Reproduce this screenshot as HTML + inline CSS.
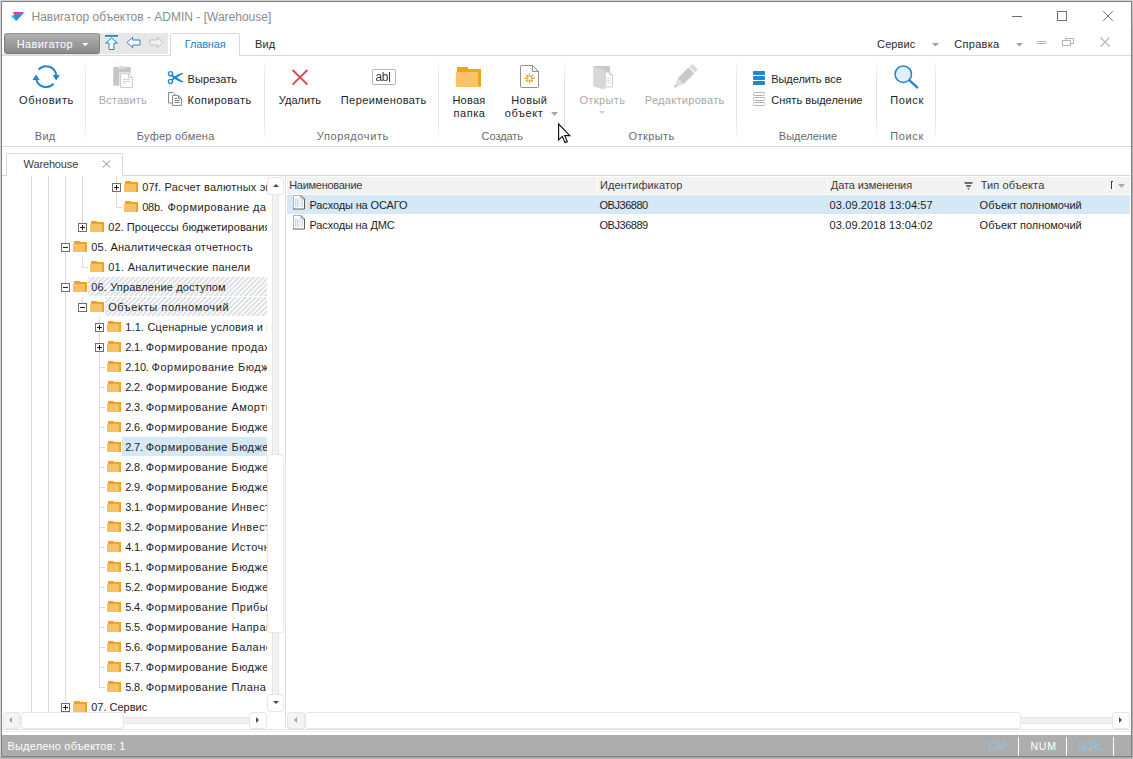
<!DOCTYPE html>
<html><head><meta charset="utf-8">
<style>
*{box-sizing:border-box;margin:0;padding:0}
html,body{width:1133px;height:759px;overflow:hidden;background:#fff}
body{font-family:"Liberation Sans",sans-serif;font-size:12px;color:#1e1e1e;position:relative}
.a{position:absolute}
.t{position:absolute;white-space:nowrap;line-height:14px}
.tt{font-size:11px;color:#1e1e1e;letter-spacing:0.3px}
#win{position:absolute;left:0;top:0;width:1133px;height:759px;background:#fff;overflow:hidden}
.sep{position:absolute;width:1px;top:58px;height:85px;background:linear-gradient(#fff,#e3e3e3 25%,#e3e3e3 75%,#fff)}
.hatch{background:repeating-linear-gradient(135deg,#e2e3e6 0,#e2e3e6 1.95px,#fff 2.15px,#fff 3.35px,#e2e3e6 3.5355px)}
.vl{position:absolute;width:1px;background:#dcdcdc}
.sb{position:absolute;background:#fff;border:1px solid #e6e6e6;border-radius:3px}
.trk{position:absolute;background:#f1f1f1;border:1px solid #e5e5e5}
#treeclip{position:absolute;left:2px;top:176px;width:265px;height:537px;overflow:hidden}
#treeclip>div{position:absolute;left:-2px;top:-176px}
</style></head><body>
<div id="win">
<!-- window frame -->
<div class="a" style="left:0;top:0;width:1133px;height:759px;background:#d3d3d3"></div>
<div class="a" style="left:1132px;top:0;width:1px;height:759px;background:linear-gradient(#cfcfcf,#b0b0b0 30px,#b0b0b0)"></div>
<div class="a" style="left:0;top:757px;width:1133px;height:2px;background:linear-gradient(#a4a4a4,#b8b8b8)"></div>
<div class="a" style="left:1px;top:1px;width:1131px;height:756px;background:#808080"></div>
<div class="a" style="left:2px;top:2px;width:1129px;height:754px;background:#fff"></div>

<!-- TITLE -->
<svg class="a" style="left:10px;top:11px" width="16" height="11" viewBox="0 0 16 11">
<polygon points="2.8,1 14.5,1 4.6,4.2" fill="#e6349a"/>
<polygon points="1,5 5,3.6 6,10" fill="#21c4f0"/>
<polygon points="14.8,1 4.2,4 6,10.2" fill="#2b8fd0"/>
</svg>
<!-- window buttons -->
<div class="a" style="left:1012px;top:16px;width:10px;height:1px;background:#6e6e6e"></div>
<div class="a" style="left:1057px;top:11px;width:10px;height:10px;border:1px solid #6e6e6e"></div>
<svg class="a" style="left:1103px;top:11px" width="10" height="10" viewBox="0 0 10 10"><path d="M0.3,0.3 L9.7,9.7 M9.7,0.3 L0.3,9.7" stroke="#6e6e6e" stroke-width="1" fill="none"/></svg>

<!-- TAB ROW -->
<div class="a" style="left:2px;top:55px;width:1129px;height:1px;background:#d9d9d9"></div>
<div class="a" style="left:99px;top:33px;width:69px;height:21px;background:#e7e7e7"></div>
<div class="a" style="left:4px;top:33px;width:96px;height:21px;border:1px solid #838383;border-top-color:#979797;border-bottom-color:#777;border-radius:3px;background:linear-gradient(#b0b0b0,#8a8a8a)"></div>
<div class="a" style="left:2px;top:54px;width:98px;height:1px;background:#e9e9e9"></div>
<svg class="a" style="left:81.5px;top:43px" width="7" height="4" viewBox="0 0 7 4"><polygon points="0.3,0 6.3,0 3.3,3.2" fill="#fff"/></svg>
<!-- quick access icons -->
<svg class="a" style="left:100px;top:33px" width="68" height="21" viewBox="100 33 68 21">
<rect x="105" y="35" width="13" height="1.8" fill="#1f86cf"/>
<path d="M111.5,37.9 L117.4,43 H114 V49.5 H109 V43 H105.6 Z" fill="#fff" stroke="#1f86cf" stroke-width="1"/>
<path d="M127,42.5 L132.7,37.2 V40 H140 V45 H132.7 V47.8 Z" fill="#fff" stroke="#1f86cf" stroke-width="1"/>
<path d="M163,42.5 L157.3,37.2 V40 H150 V45 H157.3 V47.8 Z" fill="#f1f1f1" stroke="#c2c2c2" stroke-width="1"/>
</svg>
<!-- tabs -->
<div class="a" style="left:170px;top:33px;width:70px;height:23px;border:1px solid #dbdbdb;border-bottom:0;border-radius:2px 2px 0 0;background:#fff"></div>
<svg class="a" style="left:932px;top:43px" width="7" height="4" viewBox="0 0 7 4"><polygon points="0,0 7,0 3.5,3.6" fill="#a2a2a2"/></svg>
<svg class="a" style="left:1016px;top:43px" width="7" height="4" viewBox="0 0 7 4"><polygon points="0,0 7,0 3.5,3.6" fill="#a2a2a2"/></svg>
<!-- mdi buttons -->
<div class="a" style="left:1036px;top:41px;width:11px;height:3px;border:1px solid #b5b5b5;border-radius:1.5px"></div>
<div class="a" style="left:1065px;top:38px;width:9px;height:6px;border:1px solid #b5b5b5;border-radius:.5px"></div>
<div class="a" style="left:1062px;top:40px;width:9px;height:6px;border:1px solid #b5b5b5;border-radius:.5px;background:#fff"></div>
<svg class="a" style="left:1100px;top:37px" width="10" height="10" viewBox="0 0 10 10"><path d="M0.5,0.5 L9.5,9.5 M9.5,0.5 L0.5,9.5" stroke="#b5b5b5" stroke-width="1.1" fill="none"/></svg>

<!-- RIBBON -->
<div class="a" style="left:2px;top:146px;width:1129px;height:1px;background:#d9d9d9"></div>
<div class="sep" style="left:85px"></div>
<div class="sep" style="left:264px"></div>
<div class="sep" style="left:438px"></div>
<div class="sep" style="left:564px"></div>
<div class="sep" style="left:736px"></div>
<div class="sep" style="left:876px"></div>
<div class="sep" style="left:935px"></div>

<!-- refresh -->
<svg class="a" style="left:32px;top:64px" width="28" height="26" viewBox="0 0 28 26">
<path d="M6.6,5.6 A10.2,10.2 0 0 1 24.3,11.6" stroke="#1f86cf" stroke-width="2" fill="none"/>
<polygon points="20.6,11 27.8,11 24.2,16.6" fill="#1f86cf"/>
<path d="M21.6,19.8 A10.2,10.2 0 0 1 4.3,15.4" stroke="#1f86cf" stroke-width="2" fill="none"/>
<polygon points="0.5,16 7.7,16 4.1,10.4" fill="#1f86cf"/>
</svg>
<!-- paste (disabled) -->
<svg class="a" style="left:112px;top:65px" width="22" height="24" viewBox="0 0 22 24">
<rect x="1.2" y="2" width="17.6" height="18.8" rx="1.2" fill="#c6c6c6"/>
<rect x="6.2" y="1.1" width="7.7" height="2.7" fill="#dddddd"/>
<path d="M8.6,8.7 H16.6 L20.4,12.5 V22.6 H8.6 Z" fill="#fff" stroke="#fff" stroke-width="2.4"/>
<path d="M8.6,8.7 H16.6 L20.4,12.5 V22.6 H8.6 Z" fill="#fff" stroke="#c9c9c9" stroke-width="1"/>
<path d="M16.6,8.7 V12.5 H20.4" fill="none" stroke="#c9c9c9"/>
<path d="M11,14.4 H18 M11,16.5 H18 M11,18.6 H14" stroke="#cfcfcf" stroke-width="1"/>
</svg>
<!-- scissors -->
<svg class="a" style="left:167px;top:70px" width="17" height="15" viewBox="0 0 17 15">
<circle cx="3.5" cy="3.7" r="2.1" fill="none" stroke="#1f86cf" stroke-width="1.4"/>
<circle cx="3.5" cy="11.5" r="2.1" fill="none" stroke="#1f86cf" stroke-width="1.4"/>
<path d="M5.3,4.6 C8.5,6.6 12.5,9.6 16.2,11.5 L15.9,12.5 C12,12 8,9.4 4.4,6 Z" fill="#1f86cf"/>
<path d="M5.3,10.6 C8.5,8.6 12.5,5.6 16.2,3.7 L15.9,2.7 C12,3.2 8,5.8 4.4,9.2 Z" fill="#1f86cf"/>
</svg>
<!-- copy -->
<svg class="a" style="left:167px;top:91px" width="16" height="16" viewBox="0 0 16 16">
<path d="M1.5,1.5 H6 L8.5,4 V12 H1.5 Z" fill="#fff" stroke="#8c8c8c"/>
<path d="M5.5,4.5 H11.5 L14.5,7.5 V14.5 H5.5 Z" fill="#fff" stroke="#8c8c8c"/>
<path d="M11.5,4.5 V7.5 H14.5" fill="none" stroke="#8c8c8c"/>
<path d="M7.5,7.5 H10 M7.5,9.5 H12.5 M7.5,11.5 H12.5" stroke="#7c7c7c"/>
</svg>
<!-- delete X -->
<svg class="a" style="left:291px;top:69px" width="18" height="17" viewBox="0 0 18 17"><path d="M1.6,1 L16.4,15.6 M16.4,1 L1.6,15.6" stroke="#e0474f" stroke-width="1.9" fill="none"/></svg>
<!-- rename -->
<div class="a" style="left:372px;top:69px;width:24px;height:16px;border:1px solid #b2b2b2;border-radius:1.5px;background:#fff"></div>
<div class="t" style="left:375.6px;top:69.6px;font-size:12px;color:#3a3a3a;letter-spacing:-0.6px;filter:grayscale(1)">ab</div>
<div class="a" style="left:389px;top:72px;width:1px;height:10px;background:#3a3a3a"></div>
<!-- big folder -->
<svg class="a" style="left:455px;top:66px" width="27" height="22" viewBox="0 0 27 22">
<path d="M2,1 H13 V3 H26 V20.8 H2 Z" fill="#f3a11f"/>
<rect x="0.8" y="6" width="22.2" height="14.8" fill="#f9c468"/>
</svg>
<!-- new object -->
<svg class="a" style="left:519px;top:64px" width="21" height="25" viewBox="0 0 21 25">
<path d="M2.5,1.5 H13.5 L19.5,7.5 V22.5 Q19.5,23.5 18.5,23.5 H2.5 Q1.5,23.5 1.5,22.5 V2.5 Q1.5,1.5 2.5,1.5 Z" fill="#fff" stroke="#8e8e8e"/>
<path d="M13.5,1.5 V7.5 H19.5" fill="none" stroke="#8e8e8e"/>
<g stroke="#f5a21b" stroke-width="1.5"><path d="M10.5,9.4 V12.6 M10.5,16 V19.2 M5.6,14.3 H8.8 M12.2,14.3 H15.4 M7.2,11 L9.3,13.1 M13.8,11 L11.7,13.1 M7.2,17.6 L9.3,15.5 M13.8,17.6 L11.7,15.5"/></g>
</svg>
<svg class="a" style="left:551px;top:112px" width="7" height="4" viewBox="0 0 7 4"><polygon points="0,0 7,0 3.5,4" fill="#a8a8a8"/></svg>
<!-- open (disabled) -->
<svg class="a" style="left:592px;top:65px" width="22" height="26" viewBox="0 0 22 26">
<path d="M1.5,1 H17 Q18,1 18,2 V21 H1.5 Z" fill="#c8c8c8"/>
<path d="M13.2,7 H17.8 L20.5,9.7 V22 H13.2 Z" fill="#fff" stroke="#cdcdcd"/>
<path d="M17.6,7 V9.9 H20.5" fill="none" stroke="#cdcdcd"/>
<path d="M14.5,13.3 H18.8 M14.5,15.5 H18.8 M14.5,17.7 H18.8" stroke="#dcdcdc"/>
<path d="M1.5,1.3 L12.7,4.8 V24.8 L1.5,21.5 Z" fill="#d7d7d7"/>
</svg>
<div class="a" style="left:598.5px;top:110.5px;width:0;height:0;border:3px solid transparent;border-top:3.5px solid #d2d2d2;border-bottom:0"></div>
<!-- pencil (disabled) -->
<svg class="a" style="left:673px;top:63px" width="26" height="26" viewBox="0 0 26 26">
<polygon points="1,24.8 10.62,20.98 4.82,15.18" fill="#e0e0e0"/>
<polygon points="1,24.8 4.24,23.52 2.28,21.56" fill="#bdbdbd"/>
<polygon points="10.62,20.98 4.82,15.18 15.42,4.58 21.22,10.38" fill="#c8c8c8"/>
<polygon points="22.14,9.46 16.34,3.66 19.31,0.69 25.11,6.49" fill="#dcdcdc"/>
</svg>
<!-- select all -->
<div class="a" style="left:753px;top:71px;width:12px;height:3.6px;background:#1f86cf;border-radius:1px"></div>
<div class="a" style="left:753px;top:76px;width:12px;height:3.6px;background:#1f86cf;border-radius:1px"></div>
<div class="a" style="left:753px;top:81px;width:12px;height:3.6px;background:#1f86cf;border-radius:1px"></div>
<!-- deselect -->
<div class="a" style="left:753px;top:92px;width:12px;height:4px;border:1px solid #b4b4b4;border-radius:1.5px"></div>
<div class="a" style="left:753px;top:97px;width:12px;height:4px;border:1px solid #b4b4b4;border-radius:1.5px"></div>
<div class="a" style="left:753px;top:102px;width:12px;height:4px;border:1px solid #b4b4b4;border-radius:1.5px"></div>
<!-- search -->
<svg class="a" style="left:893px;top:64px" width="27" height="26" viewBox="0 0 27 26">
<circle cx="10.3" cy="10.2" r="8.2" fill="#e2f0f9" stroke="#1f86cf" stroke-width="1.5"/>
<path d="M16.2,16.2 L24.2,23.4" stroke="#1f86cf" stroke-width="2.4" stroke-linecap="round"/>
</svg>

<!-- DOC TAB STRIP -->
<div class="a" style="left:2px;top:175px;width:1128px;height:1px;background:#d8d8d3"></div>
<div class="a" style="left:6px;top:153px;width:117px;height:23px;border:1px solid #d9d9d9;border-bottom:0;border-radius:2px 2px 0 0;background:#fff"></div>
<svg class="a" style="left:101.5px;top:160px" width="9" height="8" viewBox="0 0 9 8"><path d="M0.6,0.5 L8.4,7.6 M8.4,0.5 L0.6,7.6" stroke="#8f8f8f" stroke-width="1" fill="none"/></svg>

<!-- TREE -->
<div class="vl" style="left:31px;top:176px;height:537px"></div>
<div class="vl" style="left:48px;top:176px;height:537px"></div>
<div class="vl" style="left:65px;top:176px;height:537px"></div>
<div class="vl" style="left:82px;top:176px;height:51px"></div>
<div class="vl" style="left:82px;top:257px;height:10px"></div>
<div class="vl" style="left:82px;top:297px;height:10px"></div>
<div class="vl" style="left:99px;top:317px;height:370px"></div>
<div class="vl" style="left:116px;top:176px;height:31px"></div>
<div id="treeclip"><div>
<svg class="a" style="left:112px;top:183px" width="9" height="9" viewBox="0 0 9 9"><rect x="0.5" y="0.5" width="8" height="8" fill="#fff" stroke="#707070"/><path d="M2,4.5 H7" stroke="#222" stroke-width="1"/><path d="M4.5,2 V7" stroke="#222" stroke-width="1"/></svg>
<svg class="a" style="left:124px;top:181px" width="14" height="11" viewBox="0 0 14 11"><path d="M1,0 H7 V1.1 H14 V11 H1 Z" fill="#f3a21e"/><rect x="0" y="3" width="12" height="8" fill="#f8c064"/></svg>
<div class="t tt" style="left:142.2px;top:180.19px;letter-spacing:0.203px">07f. Расчет валютных экв</div>
<div class="a" style="left:116px;top:207px;width:6px;height:1px;background:#dcdcdc"></div>
<svg class="a" style="left:124px;top:201px" width="14" height="11" viewBox="0 0 14 11"><path d="M1,0 H7 V1.1 H14 V11 H1 Z" fill="#f3a21e"/><rect x="0" y="3" width="12" height="8" fill="#f8c064"/></svg>
<div class="t tt" style="left:142.2px;top:200.19px;letter-spacing:-0.2px">08b.</div>
<div class="t tt" style="left:167.5px;top:200.19px;letter-spacing:0.435px">Формирование данн</div>
<svg class="a" style="left:78px;top:223px" width="9" height="9" viewBox="0 0 9 9"><rect x="0.5" y="0.5" width="8" height="8" fill="#fff" stroke="#707070"/><path d="M2,4.5 H7" stroke="#222" stroke-width="1"/><path d="M4.5,2 V7" stroke="#222" stroke-width="1"/></svg>
<svg class="a" style="left:90px;top:221px" width="14" height="11" viewBox="0 0 14 11"><path d="M1,0 H7 V1.1 H14 V11 H1 Z" fill="#f3a21e"/><rect x="0" y="3" width="12" height="8" fill="#f8c064"/></svg>
<div class="t tt" style="left:108.2px;top:220.19px;letter-spacing:0.082px">02. Процессы бюджетирования</div>
<svg class="a" style="left:61px;top:243px" width="9" height="9" viewBox="0 0 9 9"><rect x="0.5" y="0.5" width="8" height="8" fill="#fff" stroke="#707070"/><path d="M2,4.5 H7" stroke="#222" stroke-width="1"/></svg>
<svg class="a" style="left:73px;top:241px" width="14" height="11" viewBox="0 0 14 11"><path d="M1,0 H7 V1.1 H14 V11 H1 Z" fill="#f3a21e"/><rect x="0" y="3" width="12" height="8" fill="#f8c064"/></svg>
<div class="t tt" style="left:91.2px;top:240.19px;letter-spacing:0.238px">05. Аналитическая отчетность</div>
<div class="a" style="left:82px;top:267px;width:6px;height:1px;background:#dcdcdc"></div>
<svg class="a" style="left:90px;top:261px" width="14" height="11" viewBox="0 0 14 11"><path d="M1,0 H7 V1.1 H14 V11 H1 Z" fill="#f3a21e"/><rect x="0" y="3" width="12" height="8" fill="#f8c064"/></svg>
<div class="t tt" style="left:108.2px;top:260.19px;letter-spacing:0.275px">01. Аналитические панели</div>
<div class="a hatch" style="left:88px;top:277px;width:179px;height:19px"></div>
<svg class="a" style="left:61px;top:283px" width="9" height="9" viewBox="0 0 9 9"><rect x="0.5" y="0.5" width="8" height="8" fill="#fff" stroke="#707070"/><path d="M2,4.5 H7" stroke="#222" stroke-width="1"/></svg>
<svg class="a" style="left:73px;top:281px" width="14" height="11" viewBox="0 0 14 11"><path d="M1,0 H7 V1.1 H14 V11 H1 Z" fill="#f3a21e"/><rect x="0" y="3" width="12" height="8" fill="#f8c064"/></svg>
<div class="t tt" style="left:91.2px;top:280.19px;letter-spacing:0.164px">06. Управление доступом</div>
<div class="a hatch" style="left:105px;top:297px;width:162px;height:19px"></div>
<svg class="a" style="left:78px;top:303px" width="9" height="9" viewBox="0 0 9 9"><rect x="0.5" y="0.5" width="8" height="8" fill="#fff" stroke="#707070"/><path d="M2,4.5 H7" stroke="#222" stroke-width="1"/></svg>
<svg class="a" style="left:90px;top:301px" width="14" height="11" viewBox="0 0 14 11"><path d="M1,0 H7 V1.1 H14 V11 H1 Z" fill="#f3a21e"/><rect x="0" y="3" width="12" height="8" fill="#f8c064"/></svg>
<div class="t tt" style="left:108.2px;top:300.19px;letter-spacing:0.592px">Объекты полномочий</div>
<svg class="a" style="left:95px;top:323px" width="9" height="9" viewBox="0 0 9 9"><rect x="0.5" y="0.5" width="8" height="8" fill="#fff" stroke="#707070"/><path d="M2,4.5 H7" stroke="#222" stroke-width="1"/><path d="M4.5,2 V7" stroke="#222" stroke-width="1"/></svg>
<svg class="a" style="left:107px;top:321px" width="14" height="11" viewBox="0 0 14 11"><path d="M1,0 H7 V1.1 H14 V11 H1 Z" fill="#f3a21e"/><rect x="0" y="3" width="12" height="8" fill="#f8c064"/></svg>
<div class="t tt" style="left:125.2px;top:320.19px;letter-spacing:0.170px">1.1. Сценарные условия и пр</div>
<svg class="a" style="left:95px;top:343px" width="9" height="9" viewBox="0 0 9 9"><rect x="0.5" y="0.5" width="8" height="8" fill="#fff" stroke="#707070"/><path d="M2,4.5 H7" stroke="#222" stroke-width="1"/><path d="M4.5,2 V7" stroke="#222" stroke-width="1"/></svg>
<svg class="a" style="left:107px;top:341px" width="14" height="11" viewBox="0 0 14 11"><path d="M1,0 H7 V1.1 H14 V11 H1 Z" fill="#f3a21e"/><rect x="0" y="3" width="12" height="8" fill="#f8c064"/></svg>
<div class="t tt" style="left:125.2px;top:340.19px;letter-spacing:-0.2px">2.1.</div>
<div class="t tt" style="left:145.7px;top:340.19px;letter-spacing:0.462px">Формирование продаж</div>
<div class="a" style="left:99px;top:367px;width:6px;height:1px;background:#dcdcdc"></div>
<svg class="a" style="left:107px;top:361px" width="14" height="11" viewBox="0 0 14 11"><path d="M1,0 H7 V1.1 H14 V11 H1 Z" fill="#f3a21e"/><rect x="0" y="3" width="12" height="8" fill="#f8c064"/></svg>
<div class="t tt" style="left:125.2px;top:360.19px;letter-spacing:-0.2px">2.10.</div>
<div class="t tt" style="left:151.5px;top:360.19px;letter-spacing:0.516px">Формирование Бюдже</div>
<div class="a" style="left:99px;top:387px;width:6px;height:1px;background:#dcdcdc"></div>
<svg class="a" style="left:107px;top:381px" width="14" height="11" viewBox="0 0 14 11"><path d="M1,0 H7 V1.1 H14 V11 H1 Z" fill="#f3a21e"/><rect x="0" y="3" width="12" height="8" fill="#f8c064"/></svg>
<div class="t tt" style="left:125.2px;top:380.19px;letter-spacing:-0.2px">2.2.</div>
<div class="t tt" style="left:145.7px;top:380.19px;letter-spacing:0.462px">Формирование Бюджет</div>
<div class="a" style="left:99px;top:407px;width:6px;height:1px;background:#dcdcdc"></div>
<svg class="a" style="left:107px;top:401px" width="14" height="11" viewBox="0 0 14 11"><path d="M1,0 H7 V1.1 H14 V11 H1 Z" fill="#f3a21e"/><rect x="0" y="3" width="12" height="8" fill="#f8c064"/></svg>
<div class="t tt" style="left:125.2px;top:400.19px;letter-spacing:-0.2px">2.3.</div>
<div class="t tt" style="left:145.7px;top:400.19px;letter-spacing:0.462px">Формирование Амортиз</div>
<div class="a" style="left:99px;top:427px;width:6px;height:1px;background:#dcdcdc"></div>
<svg class="a" style="left:107px;top:421px" width="14" height="11" viewBox="0 0 14 11"><path d="M1,0 H7 V1.1 H14 V11 H1 Z" fill="#f3a21e"/><rect x="0" y="3" width="12" height="8" fill="#f8c064"/></svg>
<div class="t tt" style="left:125.2px;top:420.19px;letter-spacing:-0.2px">2.6.</div>
<div class="t tt" style="left:145.7px;top:420.19px;letter-spacing:0.462px">Формирование Бюджет</div>
<div class="a" style="left:122px;top:437px;width:145px;height:19px;background:#d5e8f6"></div>
<div class="a" style="left:99px;top:447px;width:6px;height:1px;background:#dcdcdc"></div>
<svg class="a" style="left:107px;top:441px" width="14" height="11" viewBox="0 0 14 11"><path d="M1,0 H7 V1.1 H14 V11 H1 Z" fill="#f3a21e"/><rect x="0" y="3" width="12" height="8" fill="#f8c064"/></svg>
<div class="t tt" style="left:125.2px;top:440.19px;letter-spacing:-0.2px">2.7.</div>
<div class="t tt" style="left:145.7px;top:440.19px;letter-spacing:0.462px">Формирование Бюджет</div>
<div class="a" style="left:99px;top:467px;width:6px;height:1px;background:#dcdcdc"></div>
<svg class="a" style="left:107px;top:461px" width="14" height="11" viewBox="0 0 14 11"><path d="M1,0 H7 V1.1 H14 V11 H1 Z" fill="#f3a21e"/><rect x="0" y="3" width="12" height="8" fill="#f8c064"/></svg>
<div class="t tt" style="left:125.2px;top:460.19px;letter-spacing:-0.2px">2.8.</div>
<div class="t tt" style="left:145.7px;top:460.19px;letter-spacing:0.462px">Формирование Бюджет</div>
<div class="a" style="left:99px;top:487px;width:6px;height:1px;background:#dcdcdc"></div>
<svg class="a" style="left:107px;top:481px" width="14" height="11" viewBox="0 0 14 11"><path d="M1,0 H7 V1.1 H14 V11 H1 Z" fill="#f3a21e"/><rect x="0" y="3" width="12" height="8" fill="#f8c064"/></svg>
<div class="t tt" style="left:125.2px;top:480.19px;letter-spacing:-0.2px">2.9.</div>
<div class="t tt" style="left:145.7px;top:480.19px;letter-spacing:0.462px">Формирование Бюджет</div>
<div class="a" style="left:99px;top:507px;width:6px;height:1px;background:#dcdcdc"></div>
<svg class="a" style="left:107px;top:501px" width="14" height="11" viewBox="0 0 14 11"><path d="M1,0 H7 V1.1 H14 V11 H1 Z" fill="#f3a21e"/><rect x="0" y="3" width="12" height="8" fill="#f8c064"/></svg>
<div class="t tt" style="left:125.2px;top:500.19px;letter-spacing:-0.2px">3.1.</div>
<div class="t tt" style="left:145.7px;top:500.19px;letter-spacing:0.462px">Формирование Инвести</div>
<div class="a" style="left:99px;top:527px;width:6px;height:1px;background:#dcdcdc"></div>
<svg class="a" style="left:107px;top:521px" width="14" height="11" viewBox="0 0 14 11"><path d="M1,0 H7 V1.1 H14 V11 H1 Z" fill="#f3a21e"/><rect x="0" y="3" width="12" height="8" fill="#f8c064"/></svg>
<div class="t tt" style="left:125.2px;top:520.19px;letter-spacing:-0.2px">3.2.</div>
<div class="t tt" style="left:145.7px;top:520.19px;letter-spacing:0.462px">Формирование Инвести</div>
<div class="a" style="left:99px;top:547px;width:6px;height:1px;background:#dcdcdc"></div>
<svg class="a" style="left:107px;top:541px" width="14" height="11" viewBox="0 0 14 11"><path d="M1,0 H7 V1.1 H14 V11 H1 Z" fill="#f3a21e"/><rect x="0" y="3" width="12" height="8" fill="#f8c064"/></svg>
<div class="t tt" style="left:125.2px;top:540.19px;letter-spacing:-0.2px">4.1.</div>
<div class="t tt" style="left:145.7px;top:540.19px;letter-spacing:0.462px">Формирование Источни</div>
<div class="a" style="left:99px;top:567px;width:6px;height:1px;background:#dcdcdc"></div>
<svg class="a" style="left:107px;top:561px" width="14" height="11" viewBox="0 0 14 11"><path d="M1,0 H7 V1.1 H14 V11 H1 Z" fill="#f3a21e"/><rect x="0" y="3" width="12" height="8" fill="#f8c064"/></svg>
<div class="t tt" style="left:125.2px;top:560.19px;letter-spacing:-0.2px">5.1.</div>
<div class="t tt" style="left:145.7px;top:560.19px;letter-spacing:0.462px">Формирование Бюджет</div>
<div class="a" style="left:99px;top:587px;width:6px;height:1px;background:#dcdcdc"></div>
<svg class="a" style="left:107px;top:581px" width="14" height="11" viewBox="0 0 14 11"><path d="M1,0 H7 V1.1 H14 V11 H1 Z" fill="#f3a21e"/><rect x="0" y="3" width="12" height="8" fill="#f8c064"/></svg>
<div class="t tt" style="left:125.2px;top:580.19px;letter-spacing:-0.2px">5.2.</div>
<div class="t tt" style="left:145.7px;top:580.19px;letter-spacing:0.462px">Формирование Бюджет</div>
<div class="a" style="left:99px;top:607px;width:6px;height:1px;background:#dcdcdc"></div>
<svg class="a" style="left:107px;top:601px" width="14" height="11" viewBox="0 0 14 11"><path d="M1,0 H7 V1.1 H14 V11 H1 Z" fill="#f3a21e"/><rect x="0" y="3" width="12" height="8" fill="#f8c064"/></svg>
<div class="t tt" style="left:125.2px;top:600.19px;letter-spacing:-0.2px">5.4.</div>
<div class="t tt" style="left:145.7px;top:600.19px;letter-spacing:0.462px">Формирование Прибыл</div>
<div class="a" style="left:99px;top:627px;width:6px;height:1px;background:#dcdcdc"></div>
<svg class="a" style="left:107px;top:621px" width="14" height="11" viewBox="0 0 14 11"><path d="M1,0 H7 V1.1 H14 V11 H1 Z" fill="#f3a21e"/><rect x="0" y="3" width="12" height="8" fill="#f8c064"/></svg>
<div class="t tt" style="left:125.2px;top:620.19px;letter-spacing:-0.2px">5.5.</div>
<div class="t tt" style="left:145.7px;top:620.19px;letter-spacing:0.462px">Формирование Направл</div>
<div class="a" style="left:99px;top:647px;width:6px;height:1px;background:#dcdcdc"></div>
<svg class="a" style="left:107px;top:641px" width="14" height="11" viewBox="0 0 14 11"><path d="M1,0 H7 V1.1 H14 V11 H1 Z" fill="#f3a21e"/><rect x="0" y="3" width="12" height="8" fill="#f8c064"/></svg>
<div class="t tt" style="left:125.2px;top:640.19px;letter-spacing:-0.2px">5.6.</div>
<div class="t tt" style="left:145.7px;top:640.19px;letter-spacing:0.462px">Формирование Баланса</div>
<div class="a" style="left:99px;top:667px;width:6px;height:1px;background:#dcdcdc"></div>
<svg class="a" style="left:107px;top:661px" width="14" height="11" viewBox="0 0 14 11"><path d="M1,0 H7 V1.1 H14 V11 H1 Z" fill="#f3a21e"/><rect x="0" y="3" width="12" height="8" fill="#f8c064"/></svg>
<div class="t tt" style="left:125.2px;top:660.19px;letter-spacing:-0.2px">5.7.</div>
<div class="t tt" style="left:145.7px;top:660.19px;letter-spacing:0.462px">Формирование Бюджет</div>
<div class="a" style="left:99px;top:687px;width:6px;height:1px;background:#dcdcdc"></div>
<svg class="a" style="left:107px;top:681px" width="14" height="11" viewBox="0 0 14 11"><path d="M1,0 H7 V1.1 H14 V11 H1 Z" fill="#f3a21e"/><rect x="0" y="3" width="12" height="8" fill="#f8c064"/></svg>
<div class="t tt" style="left:125.2px;top:680.19px;letter-spacing:-0.2px">5.8.</div>
<div class="t tt" style="left:145.7px;top:680.19px;letter-spacing:0.462px">Формирование Плана</div>
<svg class="a" style="left:61px;top:703px" width="9" height="9" viewBox="0 0 9 9"><rect x="0.5" y="0.5" width="8" height="8" fill="#fff" stroke="#707070"/><path d="M2,4.5 H7" stroke="#222" stroke-width="1"/><path d="M4.5,2 V7" stroke="#222" stroke-width="1"/></svg>
<svg class="a" style="left:73px;top:701px" width="14" height="11" viewBox="0 0 14 11"><path d="M1,0 H7 V1.1 H14 V11 H1 Z" fill="#f3a21e"/><rect x="0" y="3" width="12" height="8" fill="#f8c064"/></svg>
<div class="t tt" style="left:91.2px;top:700.19px;letter-spacing:-0.002px">07. Сервис</div>
</div></div>
<!-- tree v scrollbar -->
<div class="trk" style="left:272px;top:194px;width:7px;height:502px;border-top:0;border-bottom:0"></div>
<div class="sb" style="left:267px;top:177px;width:17px;height:18px"></div>
<div class="a" style="left:272.5px;top:183.5px;width:0;height:0;border:3px solid transparent;border-bottom:3.5px solid #4a4a4a;border-top:0"></div>
<div class="sb" style="left:267px;top:454px;width:17px;height:179px"></div>
<div class="sb" style="left:267px;top:694px;width:17px;height:18px"></div>
<div class="a" style="left:272.5px;top:701px;width:0;height:0;border:3px solid transparent;border-top:3.5px solid #4a4a4a;border-bottom:0"></div>
<!-- tree h scrollbar -->
<div class="trk" style="left:19px;top:717px;width:232px;height:7px;border-left:0;border-right:0"></div>
<div class="sb" style="left:3px;top:712px;width:17px;height:17px;background:#f4f4f4"></div>
<div class="a" style="left:8.6px;top:717px;width:0;height:0;border:3px solid transparent;border-right:3.5px solid #a0a0a0;border-left:0"></div>
<div class="sb" style="left:21px;top:712px;width:103px;height:17px"></div>
<div class="sb" style="left:249px;top:712px;width:18px;height:17px"></div>
<div class="a" style="left:255.8px;top:717px;width:0;height:0;border:3px solid transparent;border-left:3.5px solid #505050;border-right:0"></div>
<!-- splitter -->
<div class="a" style="left:285px;top:176px;width:1px;height:552px;background:#dedede"></div>

<!-- LIST -->
<div class="a" style="left:287px;top:177px;width:843px;height:17px;background:#f2f2f2"></div>
<div class="a" style="left:597px;top:177px;width:1px;height:17px;background:#fff"></div>
<div class="a" style="left:827px;top:177px;width:1px;height:17px;background:#fff"></div>
<div class="a" style="left:977px;top:177px;width:1px;height:17px;background:#fff"></div>
<div class="a" style="left:1107px;top:177px;width:1px;height:17px;background:#fff"></div>
<div class="a" style="left:1113px;top:177px;width:1px;height:17px;background:#fff"></div>
<div class="a" style="left:1111px;top:181px;width:2px;height:8px;border-left:1px solid #3a3a3a;border-top:1px solid #3a3a3a"></div>
<svg class="a" style="left:1118px;top:184px" width="7" height="4" viewBox="0 0 7 4"><polygon points="0,0 7,0 3.5,3.8" fill="#a8a8a8"/></svg>
<svg class="a" style="left:964px;top:182px" width="9" height="8" viewBox="0 0 9 8"><polygon points="0,0 9,0 7.9,2 1.1,2" fill="#6b6b6b"/><polygon points="1.7,3 7.3,3 6.3,5 2.7,5" fill="#6b6b6b"/><polygon points="3.2,6 5.8,6 4.5,8" fill="#6b6b6b"/></svg>
<div class="a" style="left:287px;top:195px;width:843px;height:19px;background:#d5e8f6"></div>
<svg class="a doc" style="left:293px;top:195px" width="12" height="15" viewBox="0 0 12 15"><path d="M0.5,0.5 H8 L11.5,4 V14 H0.5 Z" fill="#fff"/><path d="M0.5,14 V0.5 H8" fill="none" stroke="#b4b4b4"/><path d="M8,0.5 V4 H11.5" fill="none" stroke="#9a9a9a"/><path d="M8,0.5 L11.5,4 V14 H0" fill="none" stroke="#5e5e5e"/><rect x="2" y="3.6" width="8" height="8.4" fill="#ccd5e4"/><path d="M3,4.8 H4 M5,4.8 H9 M3,6.8 H4 M5,6.8 H9 M3,8.8 H4 M5,8.8 H9 M3,10.8 H4 M5,10.8 H9" stroke="#fff" stroke-width="1.2"/></svg>
<svg class="a doc" style="left:293px;top:215px" width="12" height="15" viewBox="0 0 12 15"><path d="M0.5,0.5 H8 L11.5,4 V14 H0.5 Z" fill="#fff"/><path d="M0.5,14 V0.5 H8" fill="none" stroke="#b4b4b4"/><path d="M8,0.5 V4 H11.5" fill="none" stroke="#9a9a9a"/><path d="M8,0.5 L11.5,4 V14 H0" fill="none" stroke="#5e5e5e"/><rect x="2" y="3.6" width="8" height="8.4" fill="#ccd5e4"/><path d="M3,4.8 H4 M5,4.8 H9 M3,6.8 H4 M5,6.8 H9 M3,8.8 H4 M5,8.8 H9 M3,10.8 H4 M5,10.8 H9" stroke="#fff" stroke-width="1.2"/></svg>
<!-- list h scrollbar -->
<div class="trk" style="left:304px;top:717px;width:808px;height:7px;border-left:0;border-right:0"></div>
<div class="sb" style="left:287px;top:712px;width:18px;height:17px;background:#f4f4f4"></div>
<div class="a" style="left:293.6px;top:717px;width:0;height:0;border:3px solid transparent;border-right:3.5px solid #a0a0a0;border-left:0"></div>
<div class="sb" style="left:305px;top:712px;width:716px;height:17px"></div>
<div class="sb" style="left:1112px;top:712px;width:18px;height:17px"></div>
<div class="a" style="left:1118.8px;top:717px;width:0;height:0;border:3px solid transparent;border-left:3.5px solid #505050;border-right:0"></div>

<!-- bottom lines + STATUS -->
<div class="a" style="left:2px;top:729px;width:1128px;height:1px;background:#e3e3df"></div>
<div class="a" style="left:2px;top:731px;width:1128px;height:1px;background:#ededed"></div>
<div class="a" style="left:2px;top:735px;width:1129px;height:21px;background:#adadad"></div>
<div class="a" style="left:1018px;top:737px;width:1px;height:19px;background:#fff"></div>
<div class="a" style="left:1066px;top:737px;width:1px;height:19px;background:#fff"></div>
<div class="a" style="left:1113px;top:737px;width:1px;height:19px;background:#fff"></div>

<div class="t" style="left:31.5px;top:9.84px;font-size:12px;color:#8c8c8c;letter-spacing:0.003px;">Навигатор объектов - ADMIN - [Warehouse]</div>
<div class="t" style="left:16.8px;top:37.19px;font-size:11px;color:#ffffff;letter-spacing:0.380px;">Навигатор</div>
<div class="t" style="left:184.8px;top:36.99px;font-size:11px;color:#1a7fc9;letter-spacing:-0.162px;">Главная</div>
<div class="t" style="left:255.1px;top:36.99px;font-size:11px;color:#2a2a2a;letter-spacing:0.047px;">Вид</div>
<div class="t" style="left:877.1px;top:37.19px;font-size:11px;color:#2a2a2a;letter-spacing:0.106px;">Сервис</div>
<div class="t" style="left:954.3px;top:37.19px;font-size:11px;color:#2a2a2a;letter-spacing:0.274px;">Справка</div>
<div class="t" style="left:19.1px;top:92.89px;font-size:11px;color:#1e1e1e;letter-spacing:0.627px;">Обновить</div>
<div class="t" style="left:98.8px;top:92.89px;font-size:11px;color:#a9a9a9;letter-spacing:0.194px;">Вставить</div>
<div class="t" style="left:187.6px;top:71.99px;font-size:11px;color:#1e1e1e;letter-spacing:0.080px;">Вырезать</div>
<div class="t" style="left:187.6px;top:92.89px;font-size:11px;color:#1e1e1e;letter-spacing:0.485px;">Копировать</div>
<div class="t" style="left:278.8px;top:92.89px;font-size:11px;color:#1e1e1e;letter-spacing:0.033px;">Удалить</div>
<div class="t" style="left:340.8px;top:92.89px;font-size:11px;color:#1e1e1e;letter-spacing:0.404px;">Переименовать</div>
<div class="t" style="left:452.4px;top:92.89px;font-size:11px;color:#1e1e1e;letter-spacing:0.260px;">Новая</div>
<div class="t" style="left:453.6px;top:105.69px;font-size:11px;color:#1e1e1e;letter-spacing:0.524px;">папка</div>
<div class="t" style="left:511.2px;top:92.89px;font-size:11px;color:#1e1e1e;letter-spacing:0.458px;">Новый</div>
<div class="t" style="left:504.8px;top:105.69px;font-size:11px;color:#1e1e1e;letter-spacing:0.594px;">объект</div>
<div class="t" style="left:579.4px;top:92.89px;font-size:11px;color:#a9a9a9;letter-spacing:0.399px;">Открыть</div>
<div class="t" style="left:644.8px;top:92.89px;font-size:11px;color:#a9a9a9;letter-spacing:0.292px;">Редактировать</div>
<div class="t" style="left:771.2px;top:71.99px;font-size:11px;color:#1e1e1e;letter-spacing:-0.049px;">Выделить все</div>
<div class="t" style="left:771.2px;top:92.89px;font-size:11px;color:#1e1e1e;letter-spacing:0.049px;">Снять выделение</div>
<div class="t" style="left:890.3px;top:92.89px;font-size:11px;color:#1e1e1e;letter-spacing:0.629px;">Поиск</div>
<div class="t" style="left:34.8px;top:129.19px;font-size:11px;color:#6b6b6b;letter-spacing:0.297px;">Вид</div>
<div class="t" style="left:136.8px;top:129.19px;font-size:11px;color:#6b6b6b;letter-spacing:0.250px;">Буфер обмена</div>
<div class="t" style="left:316.8px;top:129.19px;font-size:11px;color:#6b6b6b;letter-spacing:0.603px;">Упорядочить</div>
<div class="t" style="left:481.6px;top:129.19px;font-size:11px;color:#6b6b6b;letter-spacing:-0.069px;">Создать</div>
<div class="t" style="left:628.6px;top:129.19px;font-size:11px;color:#6b6b6b;letter-spacing:0.416px;">Открыть</div>
<div class="t" style="left:778.8px;top:129.19px;font-size:11px;color:#6b6b6b;letter-spacing:0.000px;">Выделение</div>
<div class="t" style="left:890.3px;top:129.19px;font-size:11px;color:#6b6b6b;letter-spacing:0.629px;">Поиск</div>
<div class="t" style="left:23.6px;top:157.19px;font-size:11px;color:#3c3c3c;letter-spacing:-0.143px;">Warehouse</div>
<div class="t" style="left:289.2px;top:178.19px;font-size:11px;color:#3a3a3a;letter-spacing:-0.279px;">Наименование</div>
<div class="t" style="left:600.0px;top:178.19px;font-size:11px;color:#3a3a3a;letter-spacing:0.118px;">Идентификатор</div>
<div class="t" style="left:830.8px;top:178.19px;font-size:11px;color:#3a3a3a;letter-spacing:-0.104px;">Дата изменения</div>
<div class="t" style="left:980.7px;top:178.19px;font-size:11px;color:#3a3a3a;letter-spacing:0.118px;">Тип объекта</div>
<div class="t" style="left:309.5px;top:198.19px;font-size:11px;color:#1e1e1e;letter-spacing:-0.131px;">Расходы на ОСАГО</div>
<div class="t" style="left:599.5px;top:198.19px;font-size:11px;color:#1e1e1e;letter-spacing:-0.469px;">OBJ36880</div>
<div class="t" style="left:829.5px;top:198.19px;font-size:11px;color:#1e1e1e;letter-spacing:0.126px;">03.09.2018 13:04:57</div>
<div class="t" style="left:979.6px;top:198.19px;font-size:11px;color:#1e1e1e;letter-spacing:-0.020px;">Объект полномочий</div>
<div class="t" style="left:309.5px;top:218.19px;font-size:11px;color:#1e1e1e;letter-spacing:-0.141px;">Расходы на ДМС</div>
<div class="t" style="left:599.5px;top:218.19px;font-size:11px;color:#1e1e1e;letter-spacing:-0.469px;">OBJ36889</div>
<div class="t" style="left:829.5px;top:218.19px;font-size:11px;color:#1e1e1e;letter-spacing:0.126px;">03.09.2018 13:04:02</div>
<div class="t" style="left:979.6px;top:218.19px;font-size:11px;color:#1e1e1e;letter-spacing:-0.020px;">Объект полномочий</div>
<div class="t" style="left:7.5px;top:739.19px;font-size:11px;color:#ffffff;letter-spacing:0.184px;">Выделено объектов: 1</div>
<div class="t" style="left:988.6px;top:739.36px;font-size:10.5px;color:#8fc3e6;letter-spacing:-0.897px;">CAP</div>
<div class="t" style="left:1030.4px;top:739.36px;font-size:10.5px;color:#ffffff;letter-spacing:0.789px;">NUM</div>
<div class="t" style="left:1078.1px;top:739.36px;font-size:10.5px;color:#8fc3e6;letter-spacing:-1.072px;">SCRL</div>
<svg class="a" style="left:557px;top:121.7px" width="15" height="23" viewBox="0 0 15 23"><path d="M1.6,2 V18 L5.3,14.4 L8,20.6 L10.3,19.6 L7.7,13.6 H12.8 Z" fill="#fff" stroke="#15151f" stroke-width="1.15" stroke-linejoin="miter"/></svg>
</div>
</body></html>
